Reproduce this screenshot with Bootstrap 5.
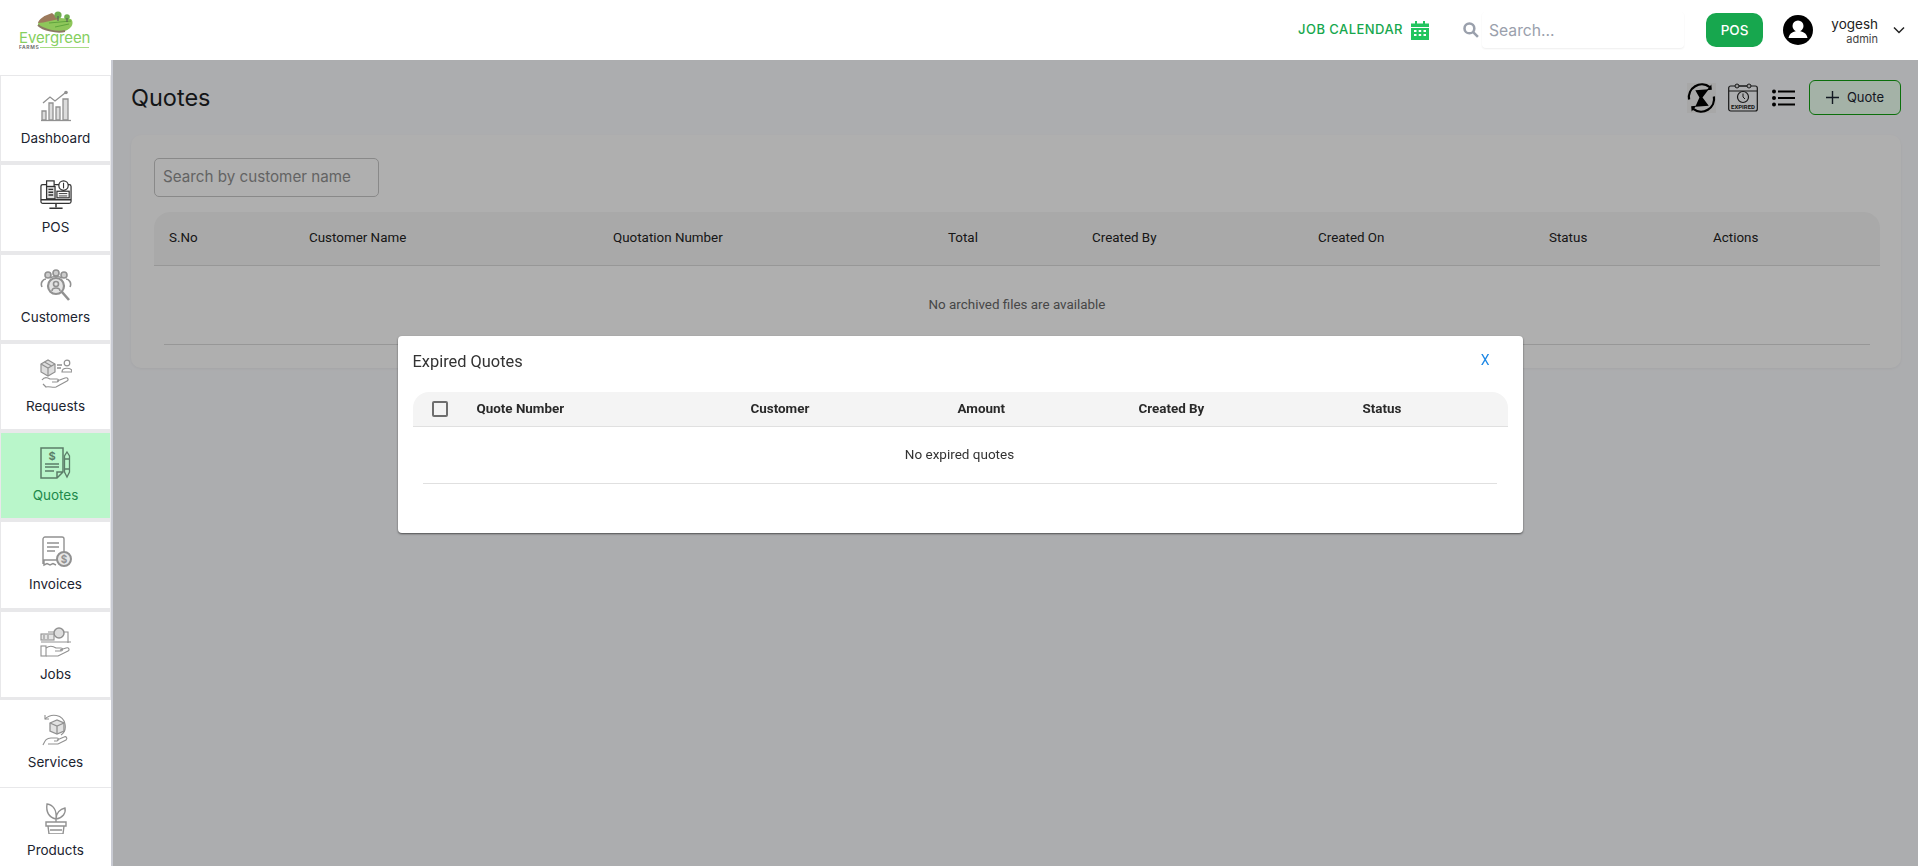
<!DOCTYPE html>
<html>

<head>
  <meta charset="utf-8">
  <meta name="viewport" content="width=device-width">
  <title>Quotes</title>
  <link href="https://cdn.jsdelivr.net/npm/bootstrap@5.3.3/dist/css/bootstrap.min.css" rel="stylesheet" />
  <style>
    html, body { height: 100%; overflow: hidden; }
    body { font-family: "Inter", sans-serif; background: #f7f8fb; color: #1c1f24; }

    .top-bar { height: 60px; background: #fff; position: relative; z-index: 20; padding: 0 13px 0 19px; }
    .logo-box { width: 70px; height: 40px; line-height: 1; }
    .logo-name { color: #86cf5f; font-size: 15px; font-weight: 400; letter-spacing: -.1px; line-height: 13px; margin-top: -3px; }
    .logo-sub { display: flex; align-items: center; gap: 1px; font-size: 5px; font-weight: 600; letter-spacing: .6px; color: #666; line-height: 5px; margin-top: 1px; }
    .logo-sub i { flex: 1; height: 1px; background: #a8dc86; }
    .job-link { color: #17a74e; font-size: 13px; font-weight: 500; letter-spacing: .45px; text-decoration: none; }
    .search-ico { margin-left: 34px; }
    .top-search { width: 202px; height: 36px; margin-left: 3px; padding: 0 7px; border: 0; border-radius: 4px; background: #fff; box-shadow: 0 1px 2px rgba(0,0,0,.07); font-size: 15.7px; }
    .top-search::placeholder { color: #9aa0ac; }
    .pos-btn { width: 57px; height: 34px; margin-left: 22px; background: #17a74e; border: 0; border-radius: 10px; color: #fff; font-size: 13.5px; font-weight: 500; padding: 0; }
    .avatar-ico { margin-left: 20px; }
    .user-box { width: 62px; margin-left: 3px; margin-top: 2px; }
    .chev-ico { margin-left: 15px; }
    .user-name { font-size: 13.5px; line-height: 16px; color: #222; }
    .user-role { font-size: 11px; line-height: 15px; color: #444; }

    .page-body { height: calc(100vh - 60px); }
    .side-bar { width: 113px; flex: none; background: #fff; border-right: 2px solid #c9cbd3; padding-top: 15px; position: relative; z-index: 20; overflow: hidden; }
    .side-item { display: flex; flex-direction: column; align-items: center; height: 89.3px; padding-top: 14px; border: solid #e8e8ea; border-width: 1px 1px 3px 1px; color: #1c2430; font-size: 13.5px; text-decoration: none; }
    .side-item svg { width: 32px; height: 32px; margin-bottom: 6px; color: #919191; }
    .side-item.dark-ico svg { color: #333; }
    .side-item.is-open { background: #b9f6ca; color: #21894a; }
    .side-item.is-open svg { color: #5b7d68; }
    .side-item.plain { height: 87.5px; border-width: 0 0 1px 0; padding-top: 14px; }

    .main-area { padding: 0 17px 0 18px; min-width: 0; }
    .head-row { height: 75px; }
    .page-title { font-size: 23.5px; font-weight: 400; margin: 2px 0 0; color: #1c1f24; }
    .add-quote { width: 92px; height: 35px; background: #ebfff0; border: 1px solid #10a010; border-radius: 6px; color: #1c2430; font-size: 13px; padding: 0; }
    .quote-panel { height: 233px; background: #fbfbfb; border-radius: 10px; padding: 23px 21px 0 23px; box-shadow: 0 1px 3px rgba(0,0,0,.05); font-family: "Roboto", sans-serif; }
    .quote-search { width: 225px; height: 39px; border: 1px solid #c4c4c4; border-radius: 5px; background: transparent; padding: 0 8px 2px; font-family: "Inter", sans-serif; font-size: 15.2px; }
    .quote-search::placeholder { color: #8f8f8f; }
    .quote-table { display: grid; grid-template-columns: 140px 304px 335px 144px 226px 231px 164px 1fr; margin-top: 15px; }
    .quote-head { display: contents; }
    .quote-head span { background: #f3f3f3; height: 54px; line-height: 52px; padding-left: 15px; border-bottom: 1px solid #d8d8d8; font-size: 13.4px; color: #222; }
    .quote-head span:first-child { border-top-left-radius: 16px; }
    .quote-head span:last-child { border-top-right-radius: 16px; }
    .quote-empty { grid-column: 1 / -1; margin: 0 10px; height: 79px; line-height: 77px; text-align: center; border-bottom: 1px solid #d8d8d8; font-size: 13.4px; color: #666; }

    .dim-layer { position: fixed; inset: 0; background: rgba(0,0,0,.3); z-index: 10; }
    .dialog-wrap { position: fixed; inset: 0; z-index: 30; display: flex; align-items: center; justify-content: center; padding: 2px 0 0 2px; }
    .dialog-box { width: 1125px; height: 197px; background: #fff; border-radius: 4px; padding: 15px 15px 0 15px; box-shadow: 0 1px 2px rgba(0,0,0,.55); font-family: "Roboto", sans-serif; }
    .dialog-title { font-size: 16.4px; color: #333; line-height: 22px; }
    .dialog-close { color: #1e88e5; font-size: 14px; line-height: 16px; margin-top: 1px; margin-right: 18px; text-decoration: none; }
    .expired-table { display: grid; grid-template-columns: 64px 274px 207px 181px 224px 1fr; margin-top: 19px; }
    .expired-head { display: contents; }
    .expired-head > span { height: 35px; line-height: 33px; background: #f4f4f4; border-bottom: 1px solid #e0e0e0; font-size: 13.4px; font-weight: 700; color: #2a2a2a; }
    .expired-head > span:first-child { border-top-left-radius: 16px; display: flex; align-items: center; padding-left: 19px; }
    .expired-head > span:last-child { border-top-right-radius: 16px; }
    .tick-box { width: 16px; height: 16px; border: 2px solid #6e6e6e; border-radius: 2px; display: block; }
    .expired-empty { grid-column: 1 / -1; margin: 0 11px 0 10px; height: 57px; line-height: 54px; text-align: center; border-bottom: 1px solid #e0e0e0; font-size: 13.5px; color: #333; }
    .pin-ico { background: #f0f0f0; }
    .gap-expired { margin-left: 12px; }
    .gap-list { margin-left: 14px; }
    .gap-add { margin-left: 14px; }
  </style>
</head>

<body>

  <nav class="top-bar d-flex align-items-center">
    <div class="logo-box">
      <svg width="70" height="24" viewBox="0 0 70 24" class="d-block">
        <path d="M19 15 C19 10 24 8 31 7 L52 9 C55 12 54 18 46 21 C38 23 24 20 19 15Z" fill="#8ec65a"/>
        <path d="M19 13 C20 9 25 6 28 5 L33 3 L40 9 L31 11 C26 12 22 13 19 13Z" fill="#9c7a5c"/>
        <path d="M19 15 C24 20 38 23 46 21" fill="none" stroke="#8a7a62" stroke-width="2"/>
        <path d="M30 13 L52 11 M36 17 L50 14" stroke="#5fa53c" stroke-width="1"/>
        <circle cx="39" cy="5" r="3.6" fill="#6fae50"/><path d="M39 6V11" stroke="#555" stroke-width="1"/>
        <circle cx="48" cy="7" r="2.8" fill="#6fae50"/><path d="M48 8V12" stroke="#555" stroke-width="1"/>
      </svg>
      <div class="logo-name">Evergreen</div>
      <div class="logo-sub">FARMS<i></i></div>
    </div>

    <a href="#" class="job-link d-flex align-items-center gap-2 ms-auto">JOB CALENDAR
      <svg width="18" height="19" viewBox="0 0 18 19" fill="#22c55e"><path d="M4 0h2v3H4zM12 0h2v3h-2zM0 2.500h18V6H0zM0 7h18v12H0z"/><path d="M3 9h2.500v2H3zM7.700 9h2.500v2H7.700zM12.500 9H15v2h-2.500zM3 13h2.500v2H3zM7.700 13h2.500v2H7.700zM12.500 13H15v2h-2.500z" fill="#fff"/></svg>
    </a>
    <svg class="search-ico" width="16" height="16" viewBox="0 0 15 15" fill="none" stroke="#9aa0ac" stroke-width="2.400"><circle cx="6" cy="6" r="4.600"/><path d="M9.500 9.500L14 14"/></svg>
    <input class="top-search" placeholder="Search...">
    <button class="pos-btn">POS</button>
    <svg class="avatar-ico" width="30" height="30" viewBox="0 0 30 30"><circle cx="15" cy="15" r="15" fill="#000"/><circle cx="15" cy="11" r="5.500" fill="#fff"/><path d="M5.500 23c1-5 5-7 9.500-7s8.500 2 9.500 7z" fill="#fff"/></svg>
    <div class="user-box text-end">
      <div class="user-name">yogesh</div>
      <div class="user-role">admin</div>
    </div>
    <svg class="chev-ico" width="12" height="8" viewBox="0 0 12 8" fill="none" stroke="#222" stroke-width="1.500"><path d="M1 1.500l5 5 5-5"/></svg>
  </nav>

  <div class="page-body d-flex">
    <aside class="side-bar">
      <a href="#" class="side-item">
        <svg viewBox="0 0 32 32" fill="none" stroke="currentColor" stroke-width="1.300"><path d="M1 30.500h30"/><path d="M2 30V21h4v9zM9 30V13h4v17zM16 30V17h4v13zM23 30V9h5v21z" fill="#dcdcdc"/><path d="M3 13l7-6 5 4 10-8"/><circle cx="26" cy="2.500" r="1.800" fill="currentColor" stroke="none"/></svg>
        Dashboard
      </a>
      <a href="#" class="side-item dark-ico">
        <svg viewBox="0 0 34 32" fill="none" stroke="currentColor" stroke-width="1.300"><rect x="1" y="5" width="32" height="20" rx="2"/><path d="M1 21h32M17 25v4M10 30h14" stroke-width="1.600"/><rect x="7" y="1" width="8" height="6" fill="#fff"/><rect x="7" y="7" width="9" height="13" fill="#ddd"/><path d="M9 10h5M9 13h5M9 16h5" stroke-width="1.500"/><circle cx="25" cy="6" r="5" fill="#fff"/><path d="M25 3v6" stroke-width="1.200"/><rect x="18" y="12" width="13" height="7" fill="#fff"/><path d="M20 14.500h9M20 17h9" stroke-width="1"/></svg>
        POS
      </a>
      <a href="#" class="side-item">
        <svg viewBox="0 0 32 32" fill="none" stroke="currentColor" stroke-width="1.600"><circle cx="8" cy="6" r="3" fill="#ccc"/><circle cx="16" cy="4" r="3" fill="#ccc"/><circle cx="24" cy="6" r="3" fill="#ccc"/><path d="M2 18c-2-4 1-8 4-8M30 18c2-4-1-8-4-8M10 9c3-2 9-2 12 0"/><circle cx="16" cy="17" r="8" fill="#e4e4e4" stroke-width="2.200"/><circle cx="16" cy="15" r="2.500"/><path d="M12 22c0-4 8-4 8 0"/><path d="M22 23l7 8" stroke-width="2.600"/></svg>
        Customers
      </a>
      <a href="#" class="side-item">
        <svg viewBox="0 0 32 32" fill="none" stroke="currentColor" stroke-width="1.200"><path d="M1 6l7-4 7 4v8l-7 4-7-4z" fill="#ddd"/><path d="M1 6l7 4 7-4M8 10v8M4.500 4l7 4"/><path d="M17 7h5M17 10h4" stroke-width="1.400"/><circle cx="27" cy="5" r="2.800"/><path d="M22 14c0-5 10-5 10 0z"/><path d="M2 22c2-3 5-3 8-1h7c2 0 2 3 0 3h-5M17 23l8-3c3-1 4 2 2 3l-11 6c-3 1-7-1-10 0l-3-3"/></svg>
        Requests
      </a>
      <a href="#" class="side-item is-open">
        <svg viewBox="0 0 32 32" fill="none" stroke="currentColor" stroke-width="1.500"><path d="M1 1h22v24l-6 6H1zM23 25h-6v6"/><path d="M5 17h14M5 20h14M5 24h9" stroke-width="1.300"/><text x="12" y="13" font-family="Inter, sans-serif" font-size="11" font-weight="700" text-anchor="middle" fill="currentColor" stroke="none">$</text><path d="M27 5l2.500 4v16l-2.500 5-2.500-5V9zM24.500 12h5M24.500 22h5" stroke-width="1.300"/></svg>
        Quotes
      </a>
      <a href="#" class="side-item">
        <svg viewBox="0 0 32 32" fill="none" stroke="currentColor" stroke-width="1.400"><path d="M20 24H4l0 5 3-1.500 3 1.500 3-1.500 3 1.500M3 28V3c0-1 1-2 2-2h17c1 0 2 1 2 2v13"/><path d="M7 7h12M7 11h12M7 15h8" stroke-width="1.500"/><circle cx="24" cy="23" r="7" fill="#e6e6e6" stroke-width="2"/><text x="24" y="27" font-family="Inter, sans-serif" font-size="10" font-weight="700" text-anchor="middle" fill="currentColor" stroke="none">$</text></svg>
        Invoices
      </a>
      <a href="#" class="side-item">
        <svg viewBox="0 0 32 32" fill="none" stroke="currentColor" stroke-width="1.100"><path d="M8 6h20v11M1 16h30"/><circle cx="19" cy="7" r="5" fill="#ddd" stroke-width="1.500"/><rect x="1" y="8" width="13" height="6" fill="#e6e6e6"/><path d="M4 9v4M8 9v4"/><rect x="1" y="20" width="5" height="10"/><path d="M6 22c4-3 7-2 10 0h5c2 0 2 3 0 3h-6M20 24l6-2c3-1 4 2 2 3l-10 5H6"/></svg>
        Jobs
      </a>
      <a href="#" class="side-item plain">
        <svg viewBox="0 0 32 32" fill="none" stroke="currentColor" stroke-width="1.100"><path d="M5 5c6-6 18-5 20 5 1 5-1 9-4 11"/><path d="M5 1v4h4"/><path d="M10 9l7-3 7 3v8l-7 3-7-3z" fill="#e2e2e2" stroke-width="1.300"/><path d="M10 9l7 3 7-3M17 12v8" stroke-width="1.300"/><path d="M3 31c2-4 3-7 8-7h6c2 0 2 2 0 3h-3M17 26l7-3c2-1 4 1 2 3l-8 4H8"/></svg>
        Services
      </a>
      <a href="#" class="side-item plain">
        <svg viewBox="0 0 32 32" fill="none" stroke="currentColor" stroke-width="1.400"><path d="M16 17C8 15 6 9 7 2c6 1 10 6 9 15zM16 17c0-6 4-10 9-11 1 5-2 10-9 11zM16 17v3"/><path d="M6 20h20v4H6zM8 24l1 8h14l1-8M10 28h12"/></svg>
        Products
      </a>
    </aside>

    <main class="main-area flex-grow-1">
      <div class="head-row d-flex align-items-center">
        <h1 class="page-title">Quotes</h1>
        <div class="ms-auto d-flex align-items-center">
          <svg class="pin-ico" width="29" height="30" viewBox="0 0 28 29" fill="none" stroke="#000"><path d="M2 16A12.500 12.500 0 0 1 22 4M26 13A12.500 12.500 0 0 1 6 25" stroke-width="2.200"/><path d="M19 7l5-.500-.500-5zM9 22l-5 .500.500 5z" fill="#000" stroke="none"/><path d="M8 7l13-1-6 8 6 8-13 1 4-9z" fill="#000" stroke="none"/></svg>
          <svg class="gap-expired" width="30" height="29" viewBox="0 0 30 29" fill="none" stroke="#222"><rect x=".7" y="3" width="28.600" height="25" rx="2" stroke-width="1.200"/><path d="M1 8h28" stroke-width="1"/><circle cx="9" cy="3" r="2" fill="#ddd" stroke-width="1"/><circle cx="21" cy="3" r="2" fill="#ddd" stroke-width="1"/><path d="M11 3h8" stroke-width="1"/><circle cx="15" cy="14" r="5.500" stroke-width="1.200"/><path d="M15 10.500V14l2 2" stroke-width="1"/><text x="15" y="26" font-family="Roboto, sans-serif" font-size="6" font-weight="700" text-anchor="middle" fill="#222" stroke="none">EXPIRED</text></svg>
          <svg class="gap-list" width="23" height="18" viewBox="0 0 23 18" fill="#000"><circle cx="2" cy="2.500" r="2"/><circle cx="2" cy="9" r="2"/><circle cx="2" cy="15.500" r="2"/><rect x="6" y="1.500" width="17" height="2" /><rect x="6" y="8" width="17" height="2"/><rect x="6" y="14.500" width="17" height="2"/></svg>
          <button class="add-quote gap-add d-flex align-items-center justify-content-center gap-2">
            <svg width="13" height="13" viewBox="0 0 13 13" stroke="#1c2430" stroke-width="1.400"><path d="M6.500 0v13M0 6.500h13"/></svg>Quote
          </button>
        </div>
      </div>

      <section class="quote-panel">
        <input class="quote-search d-block" placeholder="Search by customer name">
        <div class="quote-table">
          <div class="quote-head">
            <span>S.No</span><span>Customer Name</span><span>Quotation Number</span><span>Total</span><span>Created By</span><span>Created On</span><span>Status</span><span>Actions</span>
          </div>
          <div class="quote-empty">No archived files are available</div>
        </div>
      </section>
    </main>
  </div>

  <div class="dim-layer"></div>

  <div class="dialog-wrap">
    <div class="dialog-box">
      <div class="d-flex justify-content-between">
        <div class="dialog-title">Expired Quotes</div>
        <a href="#" class="dialog-close">X</a>
      </div>
      <div class="expired-table">
        <div class="expired-head">
          <span><i class="tick-box"></i></span><span>Quote Number</span><span>Customer</span><span>Amount</span><span>Created By</span><span>Status</span>
        </div>
        <div class="expired-empty">No expired quotes</div>
      </div>
    </div>
  </div>

  <script src="https://cdn.jsdelivr.net/npm/bootstrap@5.3.3/dist/js/bootstrap.bundle.min.js"></script>
</body>

</html>
